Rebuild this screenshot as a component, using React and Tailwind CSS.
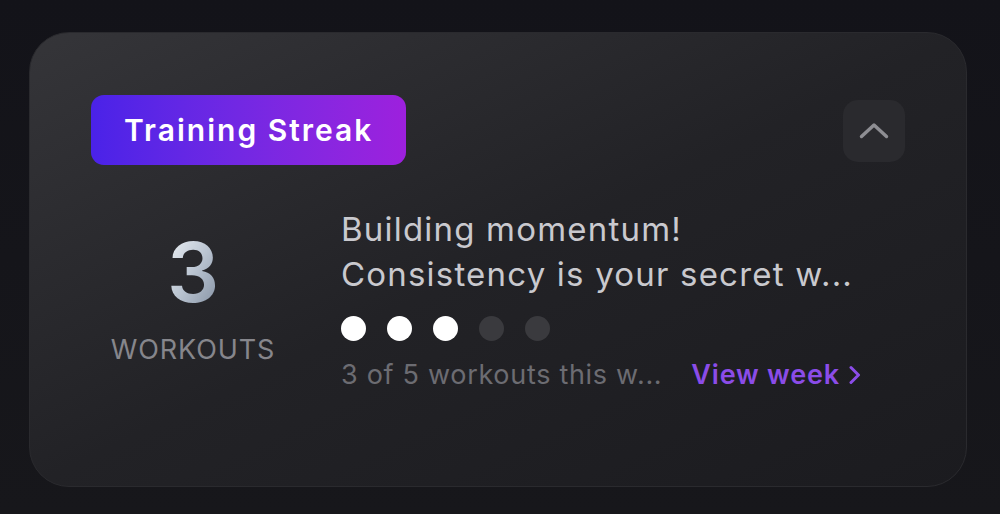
import { useState } from 'react'

const DOTS = [true, true, true, false, false]

function ChevronUp() {
  return (
    <svg width="30" height="17" viewBox="0 0 30 17" fill="none" stroke="currentColor">
      <path d="M2.5 14.5 15 3 27.5 14.5" strokeWidth={3.4} strokeLinecap="round" strokeLinejoin="round" />
    </svg>
  )
}

export default function App() {
  const [open, setOpen] = useState(true)

  return (
    <div className="w-[1000px] h-[514px] bg-linear-to-b from-[#131319] to-[#17171b] pt-[32px] pl-[29px] font-['Inter',sans-serif]">
      <div className="w-[938px] h-[455px] rounded-[40px] border border-[#2a2a2e] bg-linear-to-br from-[#353539] via-[#222226] to-[#1b1b1f] px-[61px] pt-[62px]">
        <div className="flex items-center justify-between">
          <span className="h-[70px] px-[33px] rounded-[13px] bg-linear-to-r from-[#4a22e8] to-[#9d20dd] flex items-center text-[30px] font-semibold text-white tracking-[2px]">
            Training Streak
          </span>
          <button
            type="button"
            onClick={() => setOpen(!open)}
            className="w-[62px] h-[62px] mt-[1px] rounded-[15px] bg-[#2a2a2e] flex items-center justify-center text-[#8e8e93]"
          >
            <ChevronUp />
          </button>
        </div>

        {open && (
          <div className="flex items-center mt-[42px]">
            <div className="w-[204px] flex flex-col items-center">
              <span className="text-[82px] leading-[82px] font-semibold bg-linear-to-br from-[#f2f5f9] via-[#bac4d1] to-[#7f8c9e] bg-clip-text text-transparent">
                3
              </span>
              <span className="mt-[19px] text-[27px] leading-[34px] text-[#86868c] tracking-[0.9px]">WORKOUTS</span>
            </div>

            <div className="ml-[46px] flex flex-col whitespace-nowrap">
              <p className="text-[33px] leading-[45px] text-[#c9c9ce] tracking-[1.2px]">Building momentum!</p>
              <p className="text-[33px] leading-[45px] text-[#c9c9ce] tracking-[1.2px]">Consistency is your secret w...</p>
              <div className="flex gap-[21px] mt-[19px]">
                {DOTS.map((on, i) => (
                  <span key={i} className={`w-[25px] h-[25px] rounded-full ${on ? 'bg-white' : 'bg-[#3a3a3e]'}`} />
                ))}
              </div>
              <div className="flex items-center gap-[29px] mt-[17px]">
                <span className="text-[27px] leading-[34px] text-[#6c6c72] tracking-[0.7px]">3 of 5 workouts this w...</span>
                <a className="text-[27px] leading-[34px] font-semibold text-[#8b4ce8] tracking-[0.8px] flex items-center gap-[9px]">
                  View week
                  <svg width="12" height="20" viewBox="0 0 12 20" fill="none" stroke="currentColor">
                    <path d="M2 2.5 9.5 10 2 17.5" strokeWidth={3} strokeLinecap="round" strokeLinejoin="round" />
                  </svg>
                </a>
              </div>
            </div>
          </div>
        )}
      </div>
    </div>
  )
}
